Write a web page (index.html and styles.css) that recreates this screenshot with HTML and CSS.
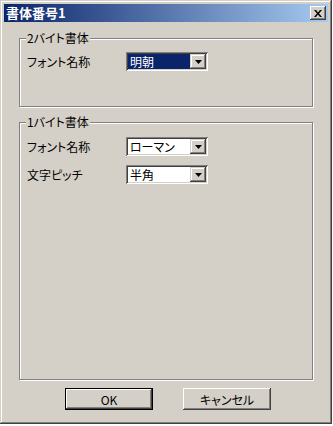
FILE: index.html
```html
<!DOCTYPE html>
<html lang="ja">
<head>
    <meta charset="UTF-8">
    <title>書体番号1</title>
    <link rel="stylesheet" href="styles.css">
</head>
<body>
    <div class="window">
        <!-- Title bar -->
        <div class="titlebar">
            <span class="title">書体番号1</span>
            <span class="close">
                <svg width="8" height="7" viewBox="0 0 8 7"><path d="M0 0h2l2 2.5L6 0h2L5 3.5 8 7H6L4 4.5 2 7H0l3-3.5z" fill="#000"/></svg>
            </span>
        </div>

        <div class="content">
            <!-- 2 byte font group -->
            <div class="group g1">
                <span class="group-title">2バイト書体</span>
                <div class="row">
                    <span class="lbl">フォント名称</span>
                    <div class="combo sel">
                        <span class="val">明朝</span>
                        <span class="arrow"><svg width="7" height="4" viewBox="0 0 7 4"><path d="M0 0h7L3.5 4z" fill="#000"/></svg></span>
                    </div>
                </div>
            </div>

            <!-- 1 byte font group -->
            <div class="group g2">
                <span class="group-title">1バイト書体</span>
                <div class="row">
                    <span class="lbl">フォント名称</span>
                    <div class="combo">
                        <span class="val">ローマン</span>
                        <span class="arrow"><svg width="7" height="4" viewBox="0 0 7 4"><path d="M0 0h7L3.5 4z" fill="#000"/></svg></span>
                    </div>
                </div>
                <div class="row">
                    <span class="lbl">文字ピッチ</span>
                    <div class="combo">
                        <span class="val">半角</span>
                        <span class="arrow"><svg width="7" height="4" viewBox="0 0 7 4"><path d="M0 0h7L3.5 4z" fill="#000"/></svg></span>
                    </div>
                </div>
            </div>

            <div class="buttons">
                <button type="button" class="btn default">OK</button>
                <button type="button" class="btn">キャンセル</button>
            </div>
        </div>
    </div>
</body>
</html>
```

FILE: styles.css
```css
body {
    margin: 0;
    background-color: #fff;
    font-family: 'Noto Sans CJK JP', sans-serif;
    font-size: 12px;
    font-feature-settings: "palt";
    color: #000;
}

.window {
    width: 332px;
    height: 424px;
    box-sizing: border-box;
    padding: 4px;
    background-color: #d4d0c8; /* classic dialog grey */
    box-shadow: inset -1px -1px #404040, inset 1px 1px #d4d0c8, inset -2px -2px #808080, inset 2px 2px #fff;
}

.titlebar {
    height: 18px;
    display: flex;
    align-items: center;
    justify-content: space-between;
    padding: 0 2px 0 2px;
    background: linear-gradient(to right, #0a246a, #a6caf0);
}

.title {
    color: #fff;
    font-weight: bold;
    font-size: 13px;
    font-feature-settings: normal;
    line-height: 18px;
}

.close {
    width: 16px;
    height: 14px;
    box-sizing: border-box;
    display: flex;
    align-items: center;
    justify-content: center;
    background-color: #d4d0c8;
    box-shadow: inset -1px -1px #404040, inset 1px 1px #fff, inset -2px -2px #808080;
}

.content {
    padding: 16px 0 0 15px;
}

/* etched group boxes */
.group {
    width: 294px;
    box-sizing: border-box;
    border: 1px solid #808080;
    box-shadow: inset 1px 1px #fff, 1px 1px #fff;
}

.g1 {
    height: 69px;
}

.g2 {
    height: 258px;
    margin-top: 15px;
}

.group-title {
    display: table;
    margin: -8px 0 0 6px;
    padding: 0 1px;
    line-height: 14px;
    background-color: #d4d0c8;
}

.row {
    display: flex;
    align-items: center;
    height: 19px;
    margin: 9px 0 0 7px;
}

.g1 .row {
    margin-top: 7px;
}

.g2 .row:first-of-type {
    margin-top: 8px;
}

.lbl {
    width: 99px;
}

.combo {
    width: 82px;
    height: 19px;
    box-sizing: border-box;
    padding: 2px;
    display: flex;
    background-color: #fff;
    box-shadow: inset 1px 1px #808080, inset -1px -1px #fff, inset 2px 2px #404040, inset -2px -2px #d4d0c8;
}

.val {
    flex: 1;
    padding-left: 2px;
    line-height: 15px;
}

.combo.sel .val {
    background-color: #0a246a;
    color: #fff;
}

.arrow {
    width: 16px;
    display: flex;
    align-items: center;
    justify-content: center;
    background-color: #d4d0c8;
    box-shadow: inset -1px -1px #404040, inset 1px 1px #d4d0c8, inset -2px -2px #808080, inset 2px 2px #fff;
}

.buttons {
    display: flex;
    gap: 30px;
    margin: 8px 0 0 46px;
}

.btn {
    width: 88px;
    height: 22px;
    box-sizing: border-box;
    padding: 0;
    border: none;
    font-family: inherit;
    font-size: 12px;
    font-feature-settings: "palt";
    color: #000;
    background-color: #d4d0c8;
    box-shadow: inset -1px -1px #404040, inset 1px 1px #fff, inset -2px -2px #808080, inset 2px 2px #d4d0c8;
}

.btn.default {
    border: 1px solid #000;
    box-shadow: inset -1px -1px #404040, inset 1px 1px #fff, inset -2px -2px #808080;
}
```
